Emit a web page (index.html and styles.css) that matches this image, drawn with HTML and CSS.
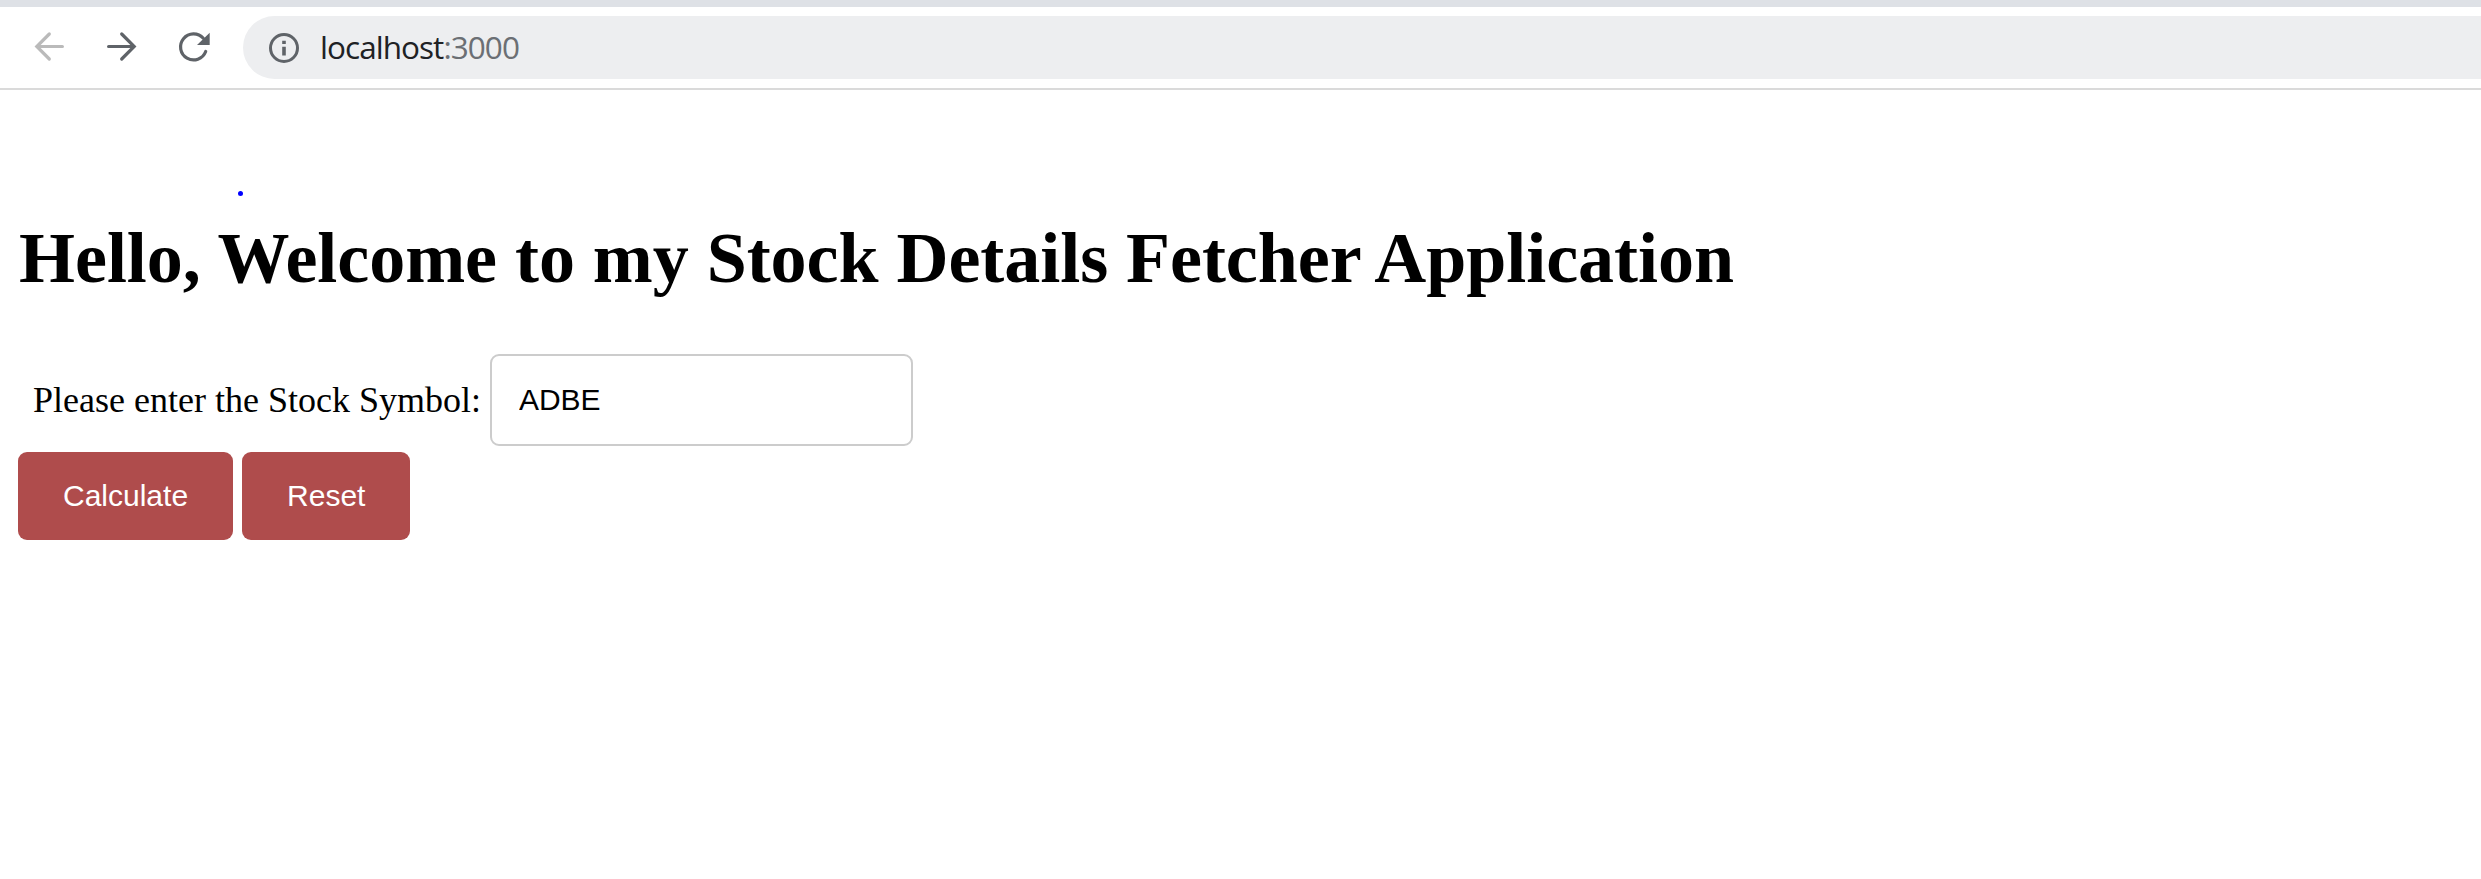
FILE: index.html
```html
<!DOCTYPE html>
<html lang="en">
<head>
<meta charset="utf-8">
<title>Stock Details Fetcher</title>
<link rel="stylesheet" href="styles.css">
</head>
<body>
<header class="browser">
  <div class="tabstrip"></div>
  <div class="toolbar">
    <svg class="nav" viewBox="0 0 200 63" aria-hidden="true">
      <g fill="none" stroke-width="3.2" stroke-linecap="round" stroke-linejoin="miter">
        <path stroke="#bababa" d="M38.400 30.500H14M25.300 18L12.800 30.500L25.300 43"/>
        <path stroke="#5f6368" d="M84.600 30.500H109M97.700 18L110.200 30.500L97.700 43"/>
        <path stroke="#5f6368" d="M181.700 35.500A13 13 0 1 1 179.300 22.300"/>
      </g>
      <path fill="#5f6368" d="M185.700 16.800V29H173z"/>
    </svg>
    <div class="address">
      <svg class="info" viewBox="0 0 30 30" aria-hidden="true">
        <circle cx="15" cy="15" r="13.500" fill="none" stroke="#5f6368" stroke-width="3"/>
        <path fill="#5f6368" d="M13.200 7.800h3.600v3.300h-3.600zM13.200 13.800h3.600v8.700h-3.600z"/>
      </svg>
      <span class="url">localhost<span class="port">:3000</span></span>
    </div>
  </div>
</header>
<main class="page">
  <div class="dot"></div>
  <h1 class="title">Hello, Welcome to my Stock Details Fetcher Application</h1>
  <form class="form">
    <div class="field">
      <label class="label" for="symbol">Please enter the Stock Symbol:</label>
      <input class="input" id="symbol" type="text" value="ADBE">
    </div>
    <div class="actions">
      <button class="button" type="button">Calculate</button>
      <button class="button" type="reset">Reset</button>
    </div>
  </form>
</main>
</body>
</html>
```
FILE: styles.css
```css
* { box-sizing: border-box; }
body { margin: 0; background: #fff; color: #000; font-family: "Liberation Serif", "Times New Roman", serif; overflow: hidden; }
.tabstrip { height: 7px; background: #dee1e6; }
.toolbar { display: flex; height: 83px; padding: 9px 0; border-bottom: 2px solid #dadada; }
.nav { width: 200px; height: 63px; margin-left: 24px; margin-right: 19px; flex: none; }
.address { flex: 1; height: 63px; display: flex; align-items: center; gap: 21px; padding-left: 26px; border-radius: 32px 0 0 32px; background: #edeef0; }
.info { width: 30px; height: 30px; flex: none; }
.url { font: 31.500px/42px "Open Sans", "Noto Sans", sans-serif; letter-spacing: -0.950px; color: #202124; white-space: nowrap; padding-bottom: 2px; }
.port { color: #6b6f74; }
.page { padding: 101px 18px 0; }
.dot { width: 5px; height: 5px; margin-left: 220px; border-radius: 50%; background: #00f; }
.title { margin: 21px 0 0 1px; font-size: 72px; line-height: 83px; font-weight: bold; letter-spacing: -0.040px; white-space: nowrap; }
.form { margin-top: 54px; }
.field { display: flex; align-items: center; gap: 9px; height: 92px; }
.label { padding-left: 15px; font-size: 36px; line-height: 42px; }
.input { width: 423px; height: 92px; padding: 27px; border: 2px solid #ccc; border-radius: 9px; background: #fff; color: #000; font: 30px/34px "Liberation Sans", Arial, sans-serif; }
.actions { display: flex; gap: 9px; margin-top: 6px; }
.button { height: 88px; padding: 27px 45px; border: 0; border-radius: 9px; background: #af4c4c; color: #fff; font: 30px/34px "Liberation Sans", Arial, sans-serif; }
```
